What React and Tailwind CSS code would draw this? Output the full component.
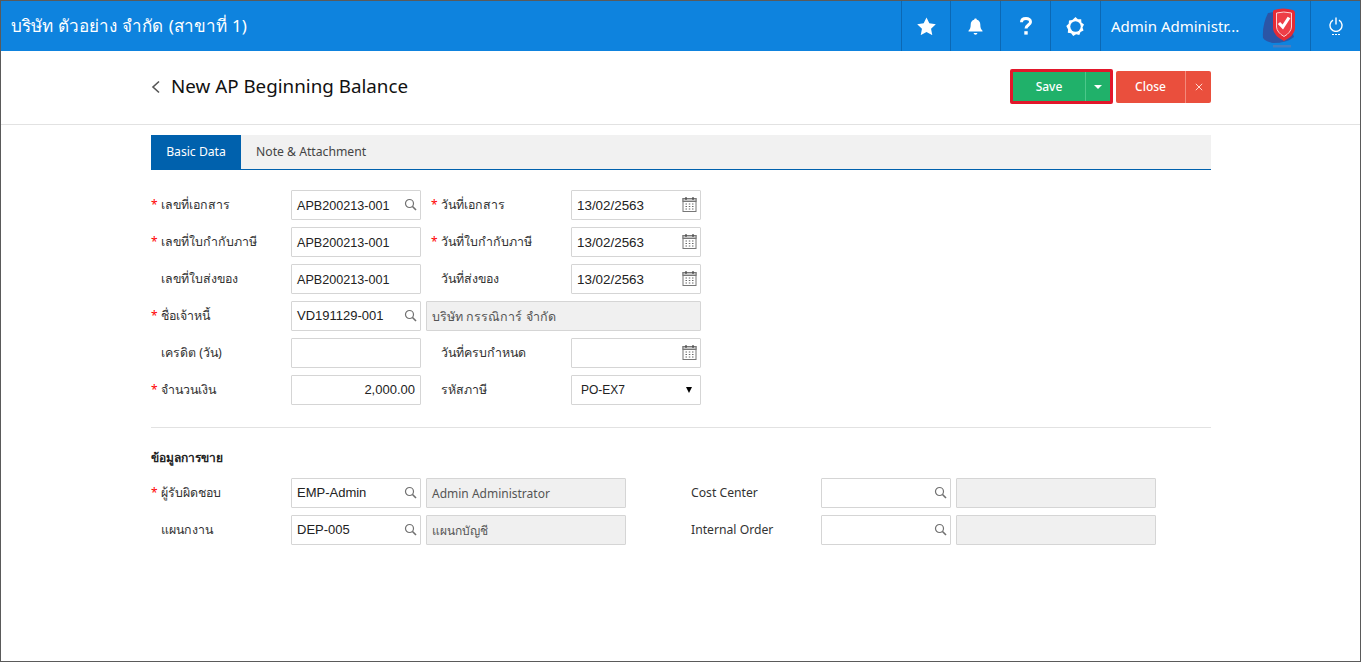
import React from "react";

const UI = { fontFamily: '"Noto Sans", "Open Sans", "Liberation Sans", sans-serif' };
const INPUT = { fontFamily: '"Liberation Sans", "Noto Sans", sans-serif' };

function Search() {
  return (
    <svg width="13" height="13" viewBox="0 0 13 13" fill="none" stroke="#707070" strokeWidth="1.200" className="absolute right-[3px] top-[7px]">
      <circle cx="5.500" cy="5.500" r="4" />
      <path d="M8.500 8.500 L12 12" strokeWidth="1.600" />
    </svg>
  );
}

function Calendar() {
  return (
    <svg width="15" height="17" viewBox="0 0 15 17" className="absolute right-[3px] top-[5px]" fill="none">
      <rect x="1" y="2.500" width="13" height="13" fill="#fff" stroke="#777" />
      <rect x="1" y="2.500" width="13" height="3" fill="#c4c4c4" stroke="#777" />
      <path d="M4 1v3M11 1v3" stroke="#444" strokeWidth="1.200" />
      <path d="M3.500 8h1.500M6.800 8h1.500M10 8h1.500M3.500 10.500h1.500M6.800 10.500h1.500M10 10.500h1.500M3.500 13h1.500M6.800 13h1.500M10 13h1.500" stroke="#666" />
    </svg>
  );
}

function Label({ text, req, latin }) {
  return (
    <div className={`w-[140px] shrink-0 flex items-center h-[30px] ${latin ? "text-[12.2px]" : "text-[12.4px]"} text-[#333] relative pl-[10px]`} style={UI}>
      {req && <span className="absolute left-0 top-[6px] text-[#f00] text-[12px]">*</span>}
      <span>{text}</span>
    </div>
  );
}

function Input({ value = "", icon, right, size = "text-[13px]", down }) {
  return (
    <div
      className={`w-[130px] h-[30px] shrink-0 relative border border-[#d5d5d5] rounded-[1px] bg-white flex items-center px-[5px] ${size} ${down ? "pt-[2px]" : ""} text-[#222] ${right ? "justify-end" : ""}`}
      style={INPUT}
    >
      <span>{value}</span>
      {icon === "search" && <Search />}
      {icon === "cal" && <Calendar />}
    </div>
  );
}

function ReadOnly({ value = "", w, size = "text-[12px]" }) {
  return (
    <div className={`${w} h-[30px] shrink-0 ml-[5px] border border-[#d5d5d5] rounded-[1px] bg-[#f0f0f0] flex items-center px-[5px] pt-[2px] ${size} text-[#555]`} style={UI}>
      {value}
    </div>
  );
}

function Row({ children }) {
  return <div className="flex h-[30px] mb-[7px]">{children}</div>;
}

function Gap() {
  return <div className="w-[10px] shrink-0" />;
}

function NavCell({ children, w }) {
  return <div className={`${w} h-full border-l border-[#0b68b4] flex items-center justify-center shrink-0`}>{children}</div>;
}

const APB = "text-[12.6px]";
const DATE = "text-[13.4px]";

export default function App() {
  return (
    <div className="w-[1361px] h-[662px] bg-white border border-[#5a5a5a] overflow-hidden flex flex-col" style={UI}>
      <header className="h-[50px] bg-[#0e83de] flex items-center shrink-0 text-white">
        <div className="flex-1 pl-[10px] text-[17px] [word-spacing:0.8px]">บริษัท ตัวอย่าง จำกัด (สาขาที่ 1)</div>
        <div className="flex h-full">
          <NavCell w="w-[49px]">
            <svg width="19" height="18" viewBox="0 0 24 23" fill="#fff"><path d="M12 .5l3.600 7.600 8.300 1.100-6.100 5.800 1.600 8.200L12 19.200 4.600 23.200l1.600-8.200L.100 9.200l8.300-1.100z" /></svg>
          </NavCell>
          <NavCell w="w-[50px]">
            <svg width="15" height="17" viewBox="0 0 15 17" fill="#fff"><path d="M7.500 0.500c.8 0 1.300.5 1.300 1.200 2.200.5 3.500 2.300 3.500 4.800 0 3 .6 4.700 2.200 6.300v.8H.5v-.8c1.600-1.600 2.200-3.300 2.200-6.300 0-2.500 1.300-4.300 3.500-4.800 0-.7.500-1.200 1.300-1.200z" /><path d="M5.700 15h3.600c0 1-.8 1.700-1.800 1.700S5.700 16 5.700 15z" /></svg>
          </NavCell>
          <NavCell w="w-[50px]">
            <svg width="12" height="18" viewBox="0 0 12 18" fill="none" stroke="#fff" strokeWidth="3"><path d="M1.500 5.200C1.500 2.800 3.300 1.500 6 1.500s4.500 1.500 4.500 3.400c0 3-4.500 3.300-4.500 6.600" /><rect x="4.300" y="14.200" width="3.400" height="3.400" fill="#fff" stroke="none" /></svg>
          </NavCell>
          <NavCell w="w-[50px]">
            <svg width="19" height="19" viewBox="0 0 19 19"><path d="M9.500 0l2.400 2.300 3.300-.1.200 3.300 2.600 2-1.500 2.900 1 3.100-3 1.400-1.200 3.100-3.200-.7-2.900 1.600-2.100-2.600-3.300-.6.300-3.300L.3 8.900 2.700 6.700 3 3.400l3.300-.3z" fill="#fff" /><circle cx="9.500" cy="9.500" r="5.200" fill="#0e83de" /></svg>
          </NavCell>
          <div className="w-[210px] h-full border-l border-[#0b68b4] shrink-0 flex items-center pl-[10px] relative">
            <span className="text-[15px] whitespace-nowrap">Admin Administr...</span>
            <svg width="38" height="42" viewBox="0 0 38 42" className="absolute left-[160px] top-[6px]">
              <path d="M7 6 Q14 4 24 5 L33 30 Q26 36 12 36 Q5 35 2 31 Q1 18 7 6z" fill="#2b55a6" />
              <path d="M13 3 Q22 0 32 3 Q34 3.500 34 6 L34 22 Q33 29 23 34 Q13 29 12 22 L12 6 Q11.500 3.500 13 3z" fill="#e52b35" />
              <path d="M15.500 6 Q22.500 4 30.500 6 L30.500 20 Q30 25.500 23 29.500 Q16 25.500 15.500 20z" fill="#ee3e47" stroke="#fbd2d4" strokeWidth="1" />
              <path d="M18 16 L21.800 20 L28 10.500" fill="none" stroke="#fff" strokeWidth="3.200" />
              <rect x="12" y="38" width="18" height="2.500" fill="#5d7ab5" opacity="0.7" />
            </svg>
          </div>
          <NavCell w="w-[50px]">
            <div className="flex flex-col items-center">
              <svg width="14" height="15" viewBox="0 0 14 15" fill="none" stroke="#fff" strokeWidth="1.400"><path d="M4 3.200A6 6 0 1 0 10 3.200" /><path d="M7 0.500V7.500" /></svg>
              <div className="flex gap-[1px] mt-[2px]"><i className="w-[2px] h-[1px] bg-white" /><i className="w-[2px] h-[1px] bg-white" /><i className="w-[2px] h-[1px] bg-white" /></div>
            </div>
          </NavCell>
        </div>
      </header>

      <div className="h-[74px] shrink-0 border-b border-[#e2e2e2] flex items-center pl-[150px] pr-[149px] pb-[2px]">
        <svg width="9" height="14" viewBox="0 0 9 14" fill="none" stroke="#555" strokeWidth="1.600" className="mr-[11px]"><path d="M8 1.500L2 7l6 5.500" /></svg>
        <h1 className="text-[18.8px] text-[#111] flex-1 pb-[1px]">New AP Beginning Balance</h1>
        <div className="flex items-center">
          <div className="flex w-[103px] h-[35px] border-[3px] border-[#e2172b] rounded-[2px] bg-[#20b16a] text-white text-[12px] font-medium">
            <div className="flex-1 flex items-center justify-center">Save</div>
            <div className="w-[25px] border-l border-[#4cc78a] flex items-center justify-center">
              <i className="w-0 h-0 border-x-[4px] border-x-transparent border-t-[4px] border-t-white" />
            </div>
          </div>
          <div className="flex w-[95px] h-[32px] ml-[3px] rounded-[2px] bg-[#ea4f3d] text-white text-[12px] font-medium">
            <div className="flex-1 flex items-center justify-center">Close</div>
            <div className="w-[26px] border-l border-[#f28a7c] flex items-center justify-center">
              <svg width="8" height="8" viewBox="0 0 8 8" stroke="#ffd9d3" strokeWidth="1"><path d="M.8.800l6.400 6.400M7.200.800L.8 7.200" /></svg>
            </div>
          </div>
        </div>
      </div>

      <main className="w-[1060px] ml-[150px] pt-[10px]">
        <div className="flex h-[35px] bg-[#f1f1f1] border-b border-[#0061ad] text-[12.2px]">
          <div className="w-[90px] bg-[#0061ad] text-white flex items-center justify-center">Basic Data</div>
          <div className="pl-[15px] flex items-center text-[#444]">Note &amp; Attachment</div>
        </div>

        <div className="pt-[20px]">
          <Row>
            <Label text="เลขที่เอกสาร" req />
            <Input value="APB200213-001" icon="search" size={APB} down />
            <Gap />
            <Label text="วันที่เอกสาร" req />
            <Input value="13/02/2563" icon="cal" size={DATE} down />
          </Row>
          <Row>
            <Label text="เลขที่ใบกำกับภาษี" req />
            <Input value="APB200213-001" size={APB} down />
            <Gap />
            <Label text="วันที่ใบกำกับภาษี" req />
            <Input value="13/02/2563" icon="cal" size={DATE} down />
          </Row>
          <Row>
            <Label text="เลขที่ใบส่งของ" />
            <Input value="APB200213-001" size={APB} down />
            <Gap />
            <Label text="วันที่ส่งของ" />
            <Input value="13/02/2563" icon="cal" size={DATE} down />
          </Row>
          <Row>
            <Label text="ชื่อเจ้าหนี้" req />
            <Input value="VD191129-001" icon="search" />
            <ReadOnly value="บริษัท กรรณิการ์ จำกัด" w="w-[275px]" size="text-[12.5px]" />
          </Row>
          <Row>
            <Label text="เครดิต (วัน)" />
            <Input />
            <Gap />
            <Label text="วันที่ครบกำหนด" />
            <Input icon="cal" />
          </Row>
          <Row>
            <Label text="จำนวนเงิน" req />
            <Input value="2,000.00" right />
            <Gap />
            <Label text="รหัสภาษี" />
            <div className="w-[130px] h-[30px] shrink-0 border border-[#d5d5d5] rounded-[1px] bg-white flex items-center justify-between pl-[9px] pr-[8px] text-[12px] text-[#222]" style={INPUT}>
              <span>PO-EX7</span>
              <i className="w-0 h-0 border-x-[3px] border-x-transparent border-t-[6px] border-t-black" />
            </div>
          </Row>
        </div>

        <div className="border-t border-[#e2e2e2] mt-[22px] pt-[20px]">
          <div className="h-[20px] text-[12px] font-bold text-[#222] flex items-center mb-[10px]">ข้อมูลการขาย</div>
          <Row>
            <Label text="ผู้รับผิดชอบ" req />
            <Input value="EMP-Admin" icon="search" />
            <ReadOnly value="Admin Administrator" w="w-[200px]" />
            <div className="w-[55px] shrink-0" />
            <Label text="Cost Center" latin />
            <Input icon="search" />
            <ReadOnly w="w-[200px]" />
          </Row>
          <Row>
            <Label text="แผนกงาน" />
            <Input value="DEP-005" icon="search" />
            <ReadOnly value="แผนกบัญชี" w="w-[200px]" />
            <div className="w-[55px] shrink-0" />
            <Label text="Internal Order" latin />
            <Input icon="search" />
            <ReadOnly w="w-[200px]" />
          </Row>
        </div>
      </main>
    </div>
  );
}
